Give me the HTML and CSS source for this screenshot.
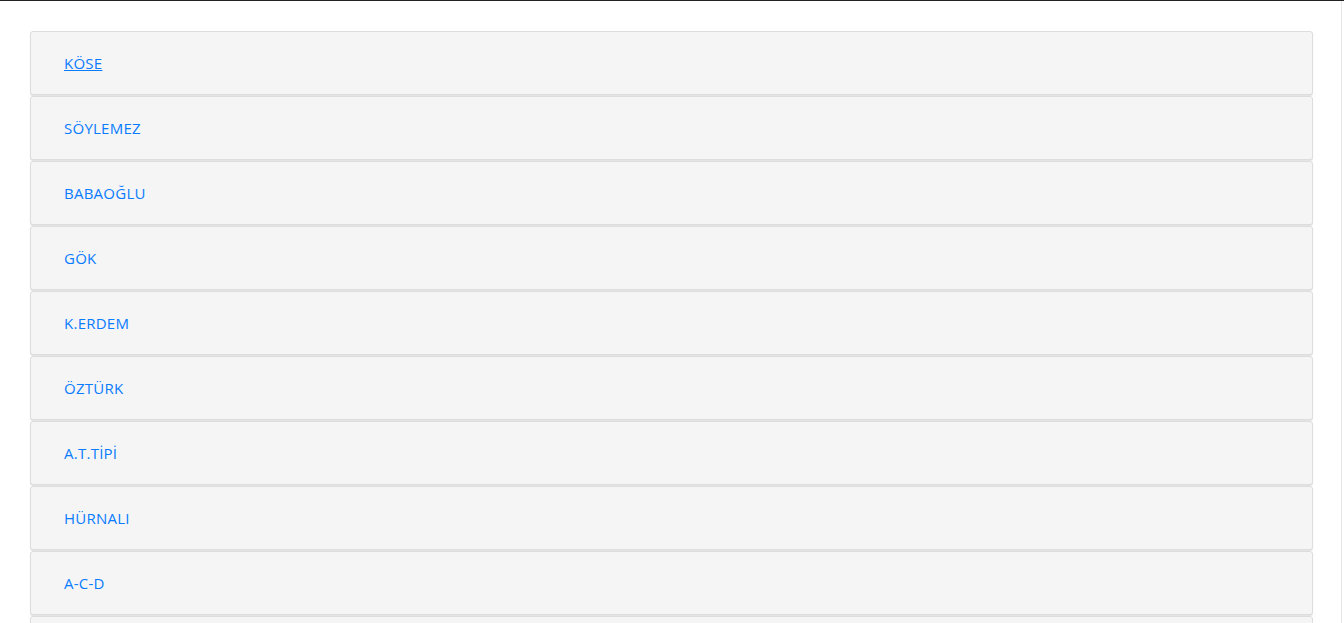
FILE: index.html
```html
<!DOCTYPE html>
<html lang="tr">
<head>
<meta charset="utf-8">
<title>Liste</title>
<link rel="stylesheet" href="styles.css">
</head>
<body>
<div class="page">
  <div class="list">
    <div class="card"><a class="link hover" href="#">KÖSE</a></div>
    <div class="card"><a class="link" href="#">SÖYLEMEZ</a></div>
    <div class="card"><a class="link" href="#">BABAOĞLU</a></div>
    <div class="card"><a class="link" href="#">GÖK</a></div>
    <div class="card"><a class="link" href="#">K.ERDEM</a></div>
    <div class="card"><a class="link" href="#">ÖZTÜRK</a></div>
    <div class="card"><a class="link" href="#">A.T.TİPİ</a></div>
    <div class="card"><a class="link" href="#">HÜRNALI</a></div>
    <div class="card"><a class="link" href="#">A-C-D</a></div>
    <div class="card"></div>
  </div>
</div>
</body>
</html>
```
FILE: styles.css
```css
html, body {
  margin: 0;
  padding: 0;
  background: #fff;
  overflow: hidden;
}
body {
  font-family: "Open Sans", "Noto Sans", sans-serif;
  font-size: 15px;
  height: 623px;
  box-sizing: border-box;
  border-top: 1px solid #222;
}
.page {
  width: 1342px;
  height: 622px;
  box-sizing: border-box;
  border-right: 1px solid #e6e6e6;
  padding: 30px 28px 0 30px;
}
.list {
  display: flex;
  flex-direction: column;
  gap: 1px;
}
.card {
  height: 62px;
  background: #f5f5f5;
  border: 1px solid #dddddd;
  border-radius: 3px;
  box-shadow: 0 1px 1px rgba(0, 0, 0, 0.12);
  display: flex;
  align-items: center;
  padding-left: 33px;
}
.link {
  color: #0a7cff;
  text-decoration: none;
  line-height: 20px;
  letter-spacing: 0.25px;
}
.link.hover {
  text-decoration: underline;
}
```
